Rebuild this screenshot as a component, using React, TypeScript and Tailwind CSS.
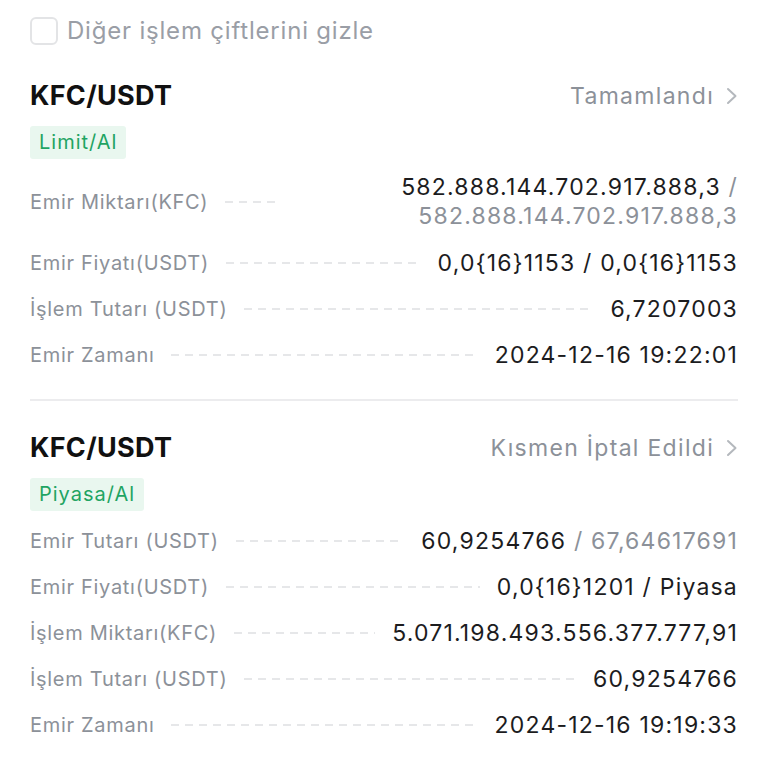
import React from "react";

type Row = {
  label: string;
  value: React.ReactNode;
  wide?: boolean;
};

type Order = {
  pair: string;
  status: string;
  kind: string;
  rows: Row[];
};

const muted = "text-[#8c9199]";

const orders: Order[] = [
  {
    pair: "KFC/USDT",
    status: "Tamamlandı",
    kind: "Limit/Al",
    rows: [
      {
        label: "Emir Miktarı(KFC)",
        wide: true,
        value: (
          <>
            <span className="block">
              582.888.144.702.917.888,3 <span className={muted}>/</span>
            </span>
            <span className={`block ${muted}`}>582.888.144.702.917.888,3</span>
          </>
        ),
      },
      { label: "Emir Fiyatı(USDT)", value: "0,0{16}1153 / 0,0{16}1153" },
      { label: "İşlem Tutarı (USDT)", value: "6,7207003" },
      { label: "Emir Zamanı", value: "2024-12-16 19:22:01" },
    ],
  },
  {
    pair: "KFC/USDT",
    status: "Kısmen İptal Edildi",
    kind: "Piyasa/Al",
    rows: [
      {
        label: "Emir Tutarı (USDT)",
        value: (
          <>
            60,9254766 <span className={muted}>/ 67,64617691</span>
          </>
        ),
      },
      { label: "Emir Fiyatı(USDT)", value: "0,0{16}1201 / Piyasa" },
      { label: "İşlem Miktarı(KFC)", value: "5.071.198.493.556.377.777,91" },
      { label: "İşlem Tutarı (USDT)", value: "60,9254766" },
      { label: "Emir Zamanı", value: "2024-12-16 19:19:33" },
    ],
  },
];

export default function App() {
  return (
    <div className="min-h-[768px] w-[768px] bg-white px-[30px] pt-[17px] font-['Inter','Noto_Sans',sans-serif] antialiased">
      <label className="flex items-center gap-[9px]">
        <span className="h-[28px] w-[28px] rounded-[6px] border-2 border-[#e3e4e6] bg-white" />
        <span className="text-[24px] leading-[28px] tracking-[0.8px] text-[#9a9ea6]">Diğer işlem çiftlerini gizle</span>
      </label>

      {orders.map((order, index) => (
        <div key={index}>
          {index > 0 && <div className="mt-[30px] h-[2px] bg-[#ececee]" />}
          <OrderCard order={order} first={index === 0} />
        </div>
      ))}
    </div>
  );
}

function OrderCard({ order, first }: { order: Order; first: boolean }) {
  return (
    <section className={first ? "mt-[36px]" : "mt-[32px]"}>
      <div className="flex h-[30px] items-center justify-between">
        <h3 className="text-[27px] font-bold leading-[30px] tracking-[0.3px] text-[#111111]">{order.pair}</h3>
        <div className="flex items-center gap-[12px] text-[23px] leading-[30px] tracking-[1.3px] text-[#8c9199]">
          <span>{order.status}</span>
          <svg width="12" height="20" viewBox="0 0 12 20" fill="none">
            <path d="M2 3 L9.5 10 L2 17" stroke="#b4b8bd" strokeWidth="2" strokeLinecap="round" strokeLinejoin="round" />
          </svg>
        </div>
      </div>
      <div className="mt-[15px] flex">
        <span className="rounded-[3px] bg-[#e9f7ef] px-[9px] py-[3px] text-[20px] leading-[27px] tracking-[1px] text-[#1fa463]">
          {order.kind}
        </span>
      </div>
      <div className={`flex flex-col gap-[18px] ${first ? "mt-[14px]" : "mt-[16px]"}`}>
        {order.rows.map((row) => (
          <DetailRow key={row.label} row={row} />
        ))}
      </div>
    </section>
  );
}

function DetailRow({ row }: { row: Row }) {
  return (
    <div className="flex items-center">
      <span className="shrink-0 text-[20px] leading-[28px] tracking-[0.7px] text-[#8c9199]">{row.label}</span>
      <span className="mx-[17px] h-[2px] min-w-[20px] flex-1 bg-[linear-gradient(to_right,#e6e7e9_58%,transparent_58%)] bg-[length:14px_2px] bg-repeat-x" />
      <span
        className={`text-right text-[23px] tracking-[1.2px] text-[#1c1c1e] ${row.wide ? "w-[442px] shrink-0 leading-[29px]" : "shrink-0 whitespace-nowrap leading-[28px]"}`}
      >
        {row.value}
      </span>
    </div>
  );
}
